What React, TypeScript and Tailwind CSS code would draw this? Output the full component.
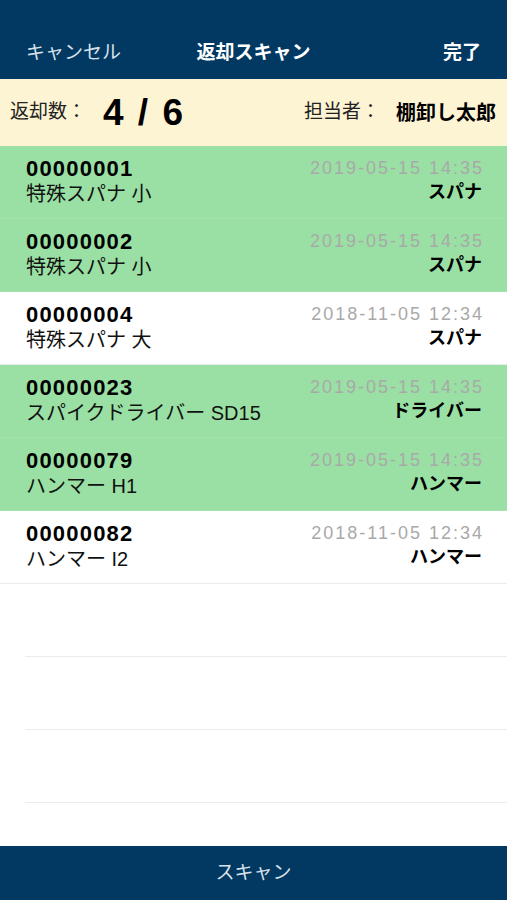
const items = [
  { id: '00000001', name: '特殊スパナ 小', date: '2019-05-15 14:35', cat: 'スパナ', done: true },
  { id: '00000002', name: '特殊スパナ 小', date: '2019-05-15 14:35', cat: 'スパナ', done: true },
  { id: '00000004', name: '特殊スパナ 大', date: '2018-11-05 12:34', cat: 'スパナ', done: false },
  { id: '00000023', name: 'スパイクドライバー SD15', date: '2019-05-15 14:35', cat: 'ドライバー', done: true },
  { id: '00000079', name: 'ハンマー H1', date: '2019-05-15 14:35', cat: 'ハンマー', done: true },
  { id: '00000082', name: 'ハンマー I2', date: '2018-11-05 12:34', cat: 'ハンマー', done: false },
];

export default function App() {
  return (
    <div
      className="w-[507px] h-[900px] flex flex-col bg-white overflow-hidden"
      style={{ fontFamily: '"Liberation Sans", "Noto Sans CJK JP", sans-serif' }}
    >
      {/* nav bar */}
      <div className="h-[79px] shrink-0 bg-[#023963] flex items-end pb-[17px] px-[26px] text-[19px] leading-none">
        <div className="flex-1 text-[#d9e1ea]">キャンセル</div>
        <div className="text-white font-bold">返却スキャン</div>
        <div className="flex-1 text-right text-white font-bold">完了</div>
      </div>

      {/* summary */}
      <div className="h-[67px] shrink-0 bg-[#fdf4d4] flex items-center pl-[10px] pr-[11px]">
        <span className="text-[19px] text-[#222]">返却数：</span>
        <span className="ml-[17px] text-[37px] font-bold text-black leading-none tracking-[2px]">4 / 6</span>
        <span className="ml-auto text-[19px] text-[#222]">担当者：</span>
        <span className="ml-[16px] text-[20px] font-bold text-black">棚卸し太郎</span>
      </div>

      {/* list */}
      <div className="flex-1 flex flex-col">
        {items.map((it) => (
          <div
            key={it.id}
            className={`h-[73px] shrink-0 flex items-start justify-between pl-[26px] pr-[25px] pt-[11px] border-b ${
              it.done ? 'bg-[#9ae0a4] border-[#a6e2ae]' : 'bg-white border-[#ebebeb]'
            }`}
          >
            <div className="flex flex-col">
              <span className="text-[22px] font-bold text-black leading-[23px] tracking-[1.2px]">{it.id}</span>
              <span className="text-[20px] text-[#111] leading-[28px]">{it.name}</span>
            </div>
            <div className="flex flex-col items-end">
              <span className="text-[18px] text-[#a9a9a9] leading-[23px] tracking-[2px] mr-[-2px]">{it.date}</span>
              <span className="text-[18px] font-bold text-black leading-[24px]">{it.cat}</span>
            </div>
          </div>
        ))}
        <div className="h-[73px] shrink-0 ml-[25px] border-b border-[#ebebeb]" />
        <div className="h-[73px] shrink-0 ml-[25px] border-b border-[#ebebeb]" />
        <div className="h-[73px] shrink-0 ml-[25px] border-b border-[#ebebeb]" />
      </div>

      {/* bottom bar */}
      <div className="h-[54px] shrink-0 bg-[#023963] flex items-center justify-center text-[19px] text-[#d9e1ea]">
        スキャン
      </div>
    </div>
  );
}
